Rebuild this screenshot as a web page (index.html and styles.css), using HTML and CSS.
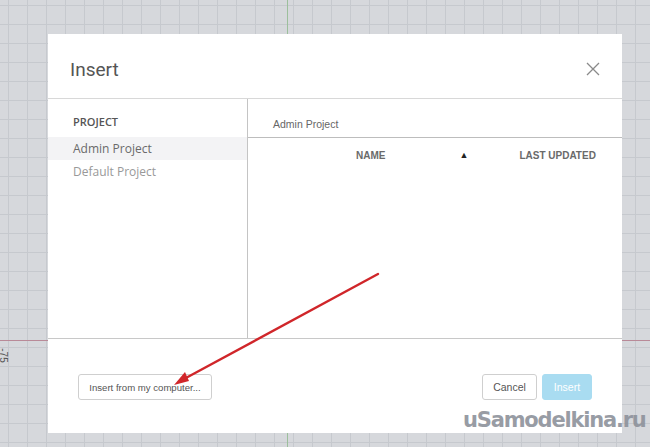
FILE: index.html
```html
<!DOCTYPE html>
<html>
<head>
<meta charset="utf-8">
<link rel="stylesheet" href="styles.css">
</head>
<body>
<div class="canvas">
  <div class="axis-x"></div>
  <div class="axis-y"></div>
  <div class="ruler-label">-75</div>

  <div class="dialog">
    <div class="dlg-header">
      <h1 class="dlg-title">Insert</h1>
      <button class="close" aria-label="Close">
        <svg width="14" height="14" viewBox="0 0 14 14"><path d="M1 1L13 13M13 1L1 13" stroke="#8a8a8a" stroke-width="1.3" fill="none"/></svg>
      </button>
    </div>
    <div class="dlg-body">
      <div class="sidebar">
        <div class="side-title">PROJECT</div>
        <div class="side-item active">Admin Project</div>
        <div class="side-item">Default Project</div>
      </div>
      <div class="main">
        <div class="crumb">Admin Project</div>
        <div class="table">
          <div class="thead">
            <span class="col-name">NAME</span>
            <span class="sort">&#9650;</span>
            <span class="col-date">LAST UPDATED</span>
          </div>
        </div>
      </div>
    </div>
    <div class="dlg-footer">
      <button class="btn btn-upload">Insert from my computer...</button>
      <div class="actions">
        <button class="btn btn-cancel">Cancel</button>
        <button class="btn btn-primary">Insert</button>
      </div>
    </div>
  </div>

  <svg class="arrow" width="650" height="447" viewBox="0 0 650 447">
    <line x1="378" y1="274" x2="184" y2="379" stroke="#d0262a" stroke-width="2.4" stroke-linecap="round"/>
    <path d="M174 385 L185 372 L189 381 Z" fill="#d0262a"/>
  </svg>

  <div class="watermark">uSamodelkina.ru</div>
</div>
</body>
</html>
```

FILE: styles.css
```css
* { box-sizing: border-box; }
html, body { margin: 0; padding: 0; }
body {
  width: 650px;
  height: 447px;
  overflow: hidden;
  font-family: "Liberation Sans", Arial, sans-serif;
}
.canvas {
  position: relative;
  width: 650px;
  height: 447px;
  background-color: #d6d8dc;
  background-image:
    linear-gradient(to right, #c6c9ce 1px, transparent 1px),
    linear-gradient(to bottom, #c6c9ce 1px, transparent 1px);
  background-size: 19px 19px;
  background-position: 8px 5px;
}
.axis-x {
  position: absolute;
  left: 0; right: 0; top: 340px;
  height: 1px;
  background: #b98a98;
}
.axis-y {
  position: absolute;
  top: 0; bottom: 0; left: 287px;
  width: 1px;
  background: #9cbf9c;
}
.ruler-label {
  position: absolute;
  left: -4px; top: 350px;
  font-size: 10px;
  color: #555;
  transform: rotate(90deg);
}
.dialog {
  position: absolute;
  left: 48px; top: 34px;
  width: 574px; height: 399px;
  background: #fff;
  display: flex;
  flex-direction: column;
}
.dlg-header {
  height: 65px;
  border-bottom: 1px solid #d8d8d8;
  display: flex;
  align-items: center;
  justify-content: space-between;
  padding: 6px 22px 0 22px;
}
.dlg-title {
  margin: 0;
  font-family: Roboto, "Liberation Sans", sans-serif;
  font-weight: 400;
  font-size: 19px;
  color: #555;
}
.close {
  border: 0;
  background: none;
  padding: 0;
  width: 14px; height: 14px;
  display: flex;
}
.dlg-body {
  height: 240px;
  display: flex;
  border-bottom: 1px solid #c8c8c8;
}
.sidebar {
  width: 200px;
  border-right: 1px solid #c4c4c4;
  padding-top: 15px;
  font-family: "Open Sans", sans-serif;
}
.side-title {
  padding-left: 25px;
  font-size: 11px;
  font-weight: 600;
  color: #555;
  height: 23px;
}
.side-item {
  padding-left: 25px;
  height: 23px;
  line-height: 23px;
  font-size: 12px;
  color: #999;
}
.side-item.active {
  background: #f3f3f5;
  color: #6a6a6a;
}
.main {
  flex: 1;
  display: flex;
  flex-direction: column;
}
.crumb {
  height: 38px;
  padding: 19px 0 0 25px;
  font-size: 10.5px;
  color: #666;
}
.table {
  flex: 1;
  border-top: 1px solid #bdbdbd;
}
.thead {
  height: 34px;
  display: flex;
  align-items: center;
  font-size: 10px;
  font-weight: 700;
  color: #6a6a6a;
}
.col-name { margin-left: 108px; }
.sort { margin-left: 74px; font-size: 9px; color: #222; }
.col-date { margin-left: 51px; }
.dlg-footer {
  flex: 1;
  display: flex;
  justify-content: space-between;
  align-items: flex-start;
  padding: 35px 30px 0 30px;
}
.actions { display: flex; gap: 5px; }
.btn {
  height: 26px;
  padding: 0 6px;
  border: 1px solid #cfcfcf;
  border-radius: 3px;
  background: #fff;
  font-family: "Liberation Sans", Arial, sans-serif;
  font-size: 10.5px;
  color: #555;
  white-space: nowrap;
}
.btn-upload { width: 134px; font-size: 9.6px; }
.btn-cancel { width: 55px; }
.btn-primary {
  width: 50px;
  background: #a9dcf1;
  border-color: #a9dcf1;
  color: #fff;
}
.arrow {
  position: absolute;
  left: 0; top: 0;
}
.watermark {
  position: absolute;
  left: 463px; top: 408px;
  font-family: "DejaVu Sans", sans-serif;
  font-weight: 700;
  font-size: 21px;
  letter-spacing: -1.2px;
  color: #8d929b;
  opacity: 0.9;
}
```
